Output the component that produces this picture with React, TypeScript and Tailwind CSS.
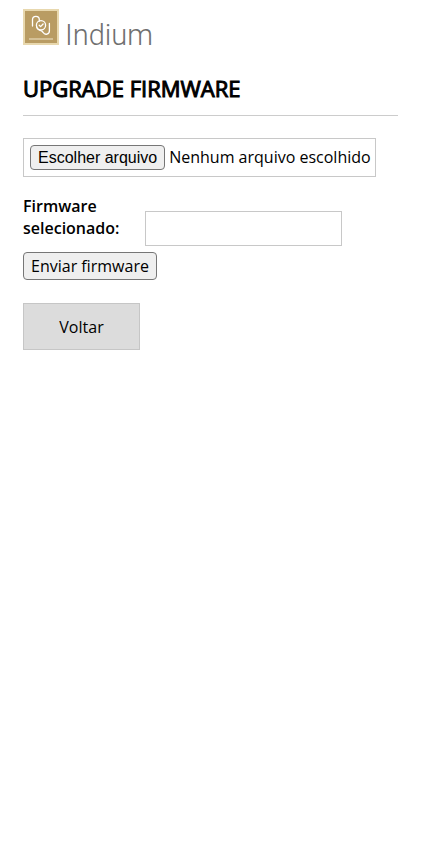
import { useState } from "react";

function Logo() {
  return (
    <div className="flex h-9 items-start gap-1.5">
      <svg viewBox="0 0 36 36" className="size-9 shrink-0" fill="none" aria-hidden="true">
        <rect width="36" height="36" fill="#e8d8ae" />
        <rect x="2" y="2" width="32" height="32" fill="#b99c63" />
        <g stroke="#fff" strokeWidth="1.3" strokeLinecap="round" strokeLinejoin="round">
          <path d="M9.500 17V10.800a3.400 3.400 0 0 1 6.800 0V12.200" />
          <circle cx="18" cy="16.200" r="4.600" />
          <path d="M16.200 16.200l1.400 1.400 2.500-2.600" />
          <path d="M13.600 17.500C14 20 16 21.500 18.500 21.800L20.200 23.500a3.300 3.300 0 0 0 6.200-1.700V14.500" />
        </g>
        <path d="M6 30h24" stroke="#f0e6cc" strokeWidth="1" />
      </svg>
      <span className="mt-2 font-['Roboto',sans-serif] text-[29px] leading-9 font-light text-[#707070]">Indium</span>
    </div>
  );
}

export default function App() {
  const [fileName, setFileName] = useState("");

  return (
    <main className="px-[23px] pt-[9px] font-['Open_Sans',sans-serif] text-base text-black">
      <Logo />
      <h1 className="mt-[27px] border-b border-[#ccc] pb-[11px] text-[22px] leading-8 font-normal [-webkit-text-stroke:1px]">
        UPGRADE FIRMWARE
      </h1>
      <form className="mt-[22px]" onSubmit={(e) => e.preventDefault()}>
        <label className="flex w-fit items-center gap-1 border border-[#c8c8c8] py-1.5 pr-1 pl-1.5">
          <input
            type="file"
            className="peer sr-only"
            onChange={(e) => setFileName(e.target.files?.[0]?.name ?? "")}
          />
          <span className="rounded border border-[#767676] bg-[#efefef] px-[7px] font-['Liberation_Sans',sans-serif] leading-[23px] peer-focus-visible:outline-2">
            Escolher arquivo
          </span>
          <span className="leading-[23px]">{fileName || "Nenhum arquivo escolhido"}</span>
        </label>
        <div className="mt-[18px] flex items-end">
          <label htmlFor="selected" className="w-[122px] pb-[7px] leading-[22px] font-semibold">
            Firmware selecionado:
          </label>
          <input id="selected" type="text" readOnly value={fileName} className="h-[35px] w-[197px] border border-[#c8c8c8] px-2" />
        </div>
        <button type="submit" className="mt-1.5 block rounded border border-[#767676] bg-[#efefef] px-[7px] leading-[26px]">
          Enviar firmware
        </button>
      </form>
      <button type="button" className="mt-[23px] block h-[47px] w-[117px] border border-[#c6c6c6] bg-[#dcdcdc]">
        Voltar
      </button>
    </main>
  );
}
